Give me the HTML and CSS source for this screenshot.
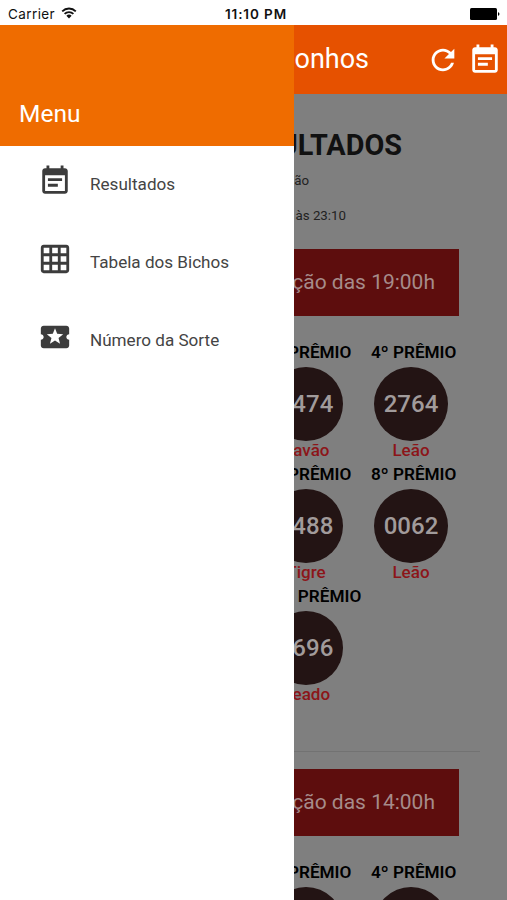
FILE: index.html
```
<!DOCTYPE html>
<html lang="pt-BR">

<head>
    <meta charset="utf-8">
    <title>Sonhos</title>
    <link rel="stylesheet" href="styles.css">
</head>

<body>

    <svg class="Symbols">
        <symbol id="event-note" viewBox="0 0 24 24">
            <path d="M17 10H7v2h10v-2zm2-7h-1V1h-2v2H8V1H6v2H5c-1.11 0-1.99.9-1.99 2L3 19c0 1.1.89 2 2 2h14c1.1 0 2-.9 2-2V5c0-1.1-.9-2-2-2zm0 16H5V8h14v11zm-5-5H7v2h7v-2z"/>
        </symbol>
        <symbol id="refresh" viewBox="0 0 24 24">
            <path d="M17.65 6.35C16.2 4.9 14.21 4 12 4c-4.42 0-7.99 3.58-7.99 8s3.57 8 7.99 8c3.73 0 6.84-2.55 7.73-6h-2.08c-.82 2.33-3.04 4-5.65 4-3.31 0-6-2.69-6-6s2.69-6 6-6c1.66 0 3.14.69 4.22 1.78L13 11h7V4l-2.35 2.35z"/>
        </symbol>
        <symbol id="grid-on" viewBox="0 0 24 24">
            <path d="M20 2H4c-1.1 0-2 .9-2 2v16c0 1.1.9 2 2 2h16c1.1 0 2-.9 2-2V4c0-1.1-.9-2-2-2zM8 20H4v-4h4v4zm0-6H4v-4h4v4zm0-6H4V4h4v4zm6 12h-4v-4h4v4zm0-6h-4v-4h4v4zm0-6h-4V4h4v4zm6 12h-4v-4h4v4zm0-6h-4v-4h4v4zm0-6h-4V4h4v4z"/>
        </symbol>
        <symbol id="local-play" viewBox="0 0 24 24">
            <path d="M20 12c0-1.1.9-2 2-2V6c0-1.1-.9-2-2-2H4c-1.1 0-1.99.9-1.99 2v4c1.1 0 1.99.9 1.99 2s-.89 2-2 2v4c0 1.1.9 2 2 2h16c1.1 0 2-.9 2-2v-4c-1.1 0-2-.9-2-2zm-4.42 4.8L12 14.5l-3.58 2.3 1.08-4.12-3.29-2.69 4.24-.25L12 5.8l1.54 3.95 4.24.25-3.29 2.69 1.09 4.11z"/>
        </symbol>
    </svg>

    <div class="StatusBar">
        <div class="Carrier">
            <span>Carrier</span>
            <svg class="Wifi" viewBox="0 0 16 12">
                <path d="M1.2 4.3a9.6 9.6 0 0 1 13.6 0M3.6 6.9a6.2 6.2 0 0 1 8.8 0"/>
                <path class="Dot" d="M5.4 8.8a3.7 3.7 0 0 1 5.2 0L8 11.5z"/>
            </svg>
        </div>
        <span class="Time">11:10 PM</span>
        <svg class="Battery" viewBox="0 0 30 12">
            <rect width="27" height="12" rx="1.5"/>
            <path d="M28 4q3 2 0 4z"/>
        </svg>
    </div>

    <div class="Toolbar">
        <span class="Title">Sonhos</span>
        <svg class="Icon"><use href="#refresh"/></svg>
        <svg class="Icon"><use href="#event-note"/></svg>
    </div>

    <div class="Page">
        <h1>RESULTADOS</h1>
        <p class="Place">Extração</p>
        <p class="Updated">às 23:10</p>

        <div class="Banner">Extração das 19:00h</div>
        <div class="Prizes">
            <div class="Prize">
                <div class="Label">3º PRÊMIO</div>
                <div class="Ball">2474</div>
                <div class="Animal">Pavão</div>
            </div>
            <div class="Prize">
                <div class="Label">4º PRÊMIO</div>
                <div class="Ball">2764</div>
                <div class="Animal">Leão</div>
            </div>
            <div class="Prize">
                <div class="Label">7º PRÊMIO</div>
                <div class="Ball">2488</div>
                <div class="Animal">Tigre</div>
            </div>
            <div class="Prize">
                <div class="Label">8º PRÊMIO</div>
                <div class="Ball">0062</div>
                <div class="Animal">Leão</div>
            </div>
            <div class="Prize">
                <div class="Label">10º PRÊMIO</div>
                <div class="Ball">2696</div>
                <div class="Animal">Veado</div>
            </div>
        </div>

        <hr>

        <div class="Banner">Extração das 14:00h</div>
        <div class="Prizes">
            <div class="Prize">
                <div class="Label">3º PRÊMIO</div>
                <div class="Ball"></div>
            </div>
            <div class="Prize">
                <div class="Label">4º PRÊMIO</div>
                <div class="Ball"></div>
            </div>
        </div>
    </div>

    <div class="Drawer">
        <div class="DrawerHeader">Menu</div>
        <div class="MenuItem">
            <svg class="Icon"><use href="#event-note"/></svg>
            <span>Resultados</span>
        </div>
        <div class="MenuItem">
            <svg class="Icon"><use href="#grid-on"/></svg>
            <span>Tabela dos Bichos</span>
        </div>
        <div class="MenuItem">
            <svg class="Icon"><use href="#local-play"/></svg>
            <span>Número da Sorte</span>
        </div>
    </div>

</body>
</html>
```
FILE: styles.css
```
* {
    box-sizing: border-box;
}

body {
    position: relative;
    display: flex;
    flex-direction: column;
    height: 900px;
    margin: 0;
    overflow: hidden;
    background: #7f7f7f;
    font-family: Roboto, sans-serif;
}

.Symbols {
    display: none;
}

.StatusBar {
    display: grid;
    grid-template-columns: 1fr auto 1fr;
    align-items: center;
    flex: none;
    height: 25px;
    padding: 2px 7px 0 8px;
    background: #ffffff;
    color: #111111;
    font-family: Inter, sans-serif;
    font-size: 13.5px;
}

.Carrier {
    display: flex;
    align-items: center;
    gap: 6px;
    letter-spacing: 0.4px;
}

.Wifi {
    width: 16px;
    height: 12px;
    margin-bottom: 2px;
    fill: none;
    stroke: #111111;
    stroke-width: 1.8;
}

.Wifi .Dot {
    fill: #111111;
    stroke: none;
}

.Time {
    padding-left: 4px;
    font-weight: 600;
    letter-spacing: 0.9px;
}

.Battery {
    justify-self: end;
    width: 30px;
    height: 12px;
}

.Toolbar {
    display: flex;
    align-items: center;
    justify-content: flex-end;
    flex: none;
    height: 69px;
    padding-right: 5px;
    background: #e65100;
    color: #ffffff;
}

.Title {
    margin: 0 57px 2px 0;
    font-size: 27px;
}

.Icon {
    width: 34px;
    height: 34px;
    fill: currentColor;
}

.Toolbar .Icon + .Icon {
    margin-left: 8px;
}

.Page {
    flex: 1;
    padding-top: 34px;
    overflow: hidden;
    color: #000000;
    text-align: right;
}

h1 {
    margin: 0;
    padding-right: 105px;
    color: #111111;
    font-size: 28.8px;
    line-height: 34px;
}

p {
    margin: 0;
    color: #222222;
    font-size: 13.3px;
    line-height: 18px;
}

.Place {
    padding: 10px 198px 0 0;
}

.Updated {
    padding: 17px 161px 0 0;
}

.Banner {
    width: 411px;
    height: 67px;
    margin: 24px 48px 0;
    padding-right: 24px;
    background: #5d0d0d;
    color: #a68b8a;
    font-size: 21px;
    line-height: 67px;
}

.Prizes {
    display: grid;
    grid-template-columns: 105px 105px;
    justify-content: end;
    margin: 25px 31px 0 0;
    text-align: left;
}

.Prize {
    height: 122px;
}

.Label {
    font-size: 17.2px;
    font-weight: 600;
    line-height: 22px;
    white-space: nowrap;
}

.Ball {
    width: 74px;
    height: 74px;
    margin: 4px 0 0 3px;
    border-radius: 50%;
    background: #231414;
    color: #a19b9b;
    font-size: 24px;
    font-weight: 500;
    line-height: 74px;
    text-align: center;
}

.Animal {
    width: 80px;
    color: #8c1519;
    font-size: 17px;
    font-weight: 500;
    line-height: 18px;
    text-align: center;
}

hr {
    width: 453px;
    margin: 44px 27px 0;
    border: none;
    border-top: 1px solid #727272;
}

hr + .Banner {
    margin-top: 17px;
}

.Drawer {
    position: absolute;
    top: 25px;
    bottom: 0;
    left: 0;
    width: 294px;
    background: #ffffff;
}

.DrawerHeader {
    display: flex;
    align-items: flex-end;
    height: 121px;
    margin-bottom: -1px;
    padding: 0 19px 17px;
    background: #ef6c00;
    color: #ffffff;
    font-size: 24.5px;
    line-height: 30px;
}

.MenuItem {
    display: flex;
    align-items: center;
    gap: 18px;
    height: 78px;
    padding-left: 38px;
    color: #444444;
    font-size: 17.1px;
}

.MenuItem .Icon {
    margin-bottom: 7px;
    fill: #3c3c3c;
}
```
